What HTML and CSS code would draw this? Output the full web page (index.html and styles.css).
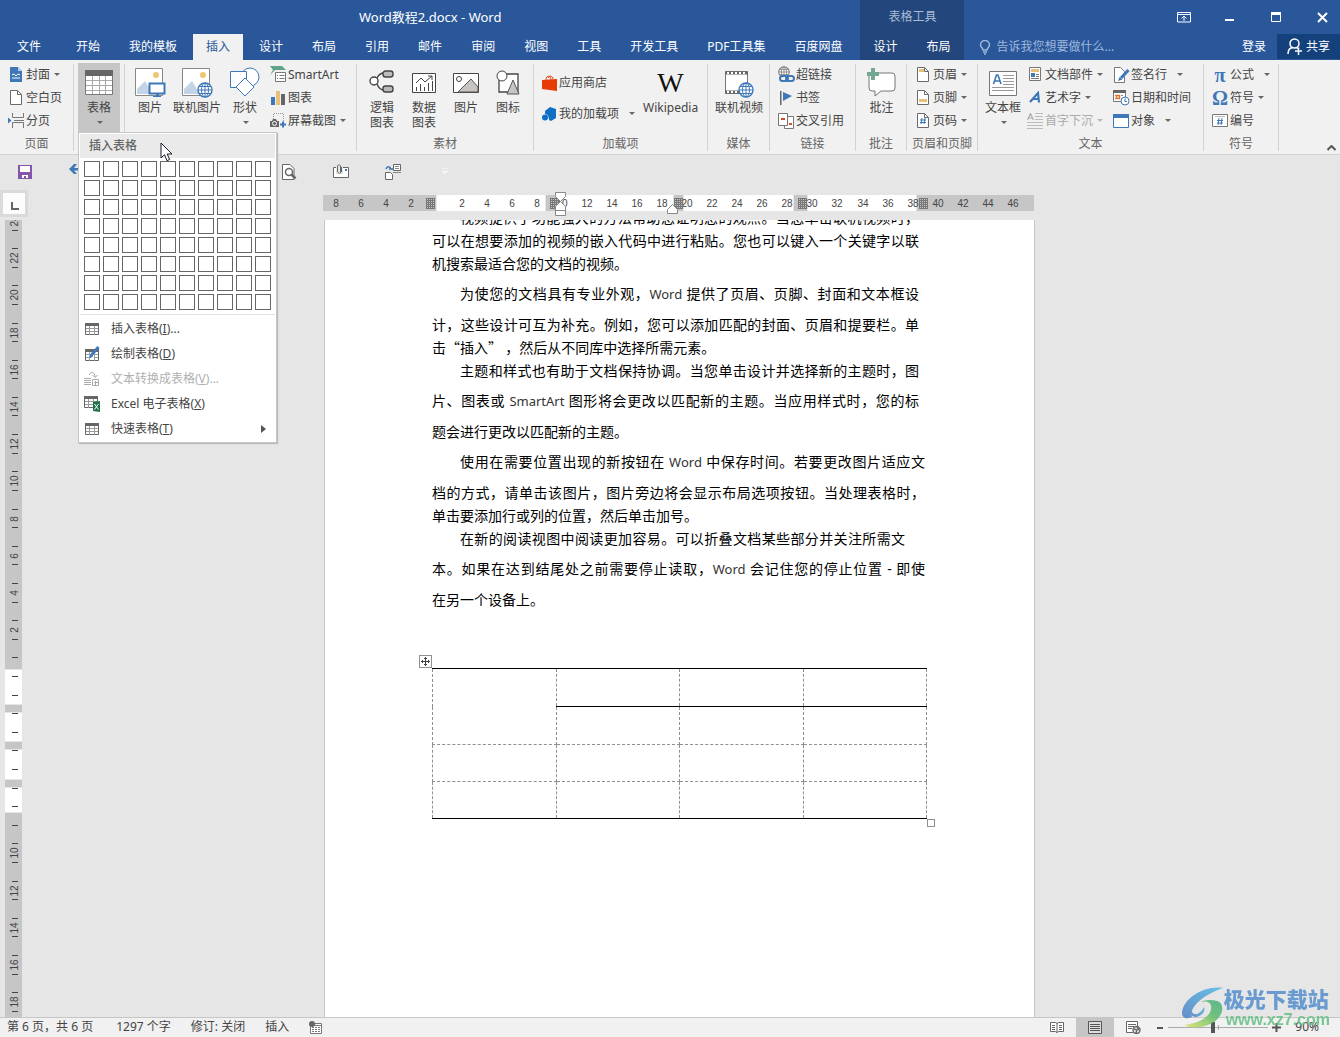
FILE: index.html
```html
<!DOCTYPE html>
<html lang="zh-CN">
<head>
<meta charset="utf-8">
<title>Word教程2.docx - Word</title>
<link rel="stylesheet" href="styles.css">
</head>
<body>
<svg class="defs" aria-hidden="true">
  <symbol id="globe" viewBox="0 0 16 16"><circle cx="8" cy="8" r="7" fill="#fff" stroke="currentColor" stroke-width="1.4"/><path d="M8 1v14M1 8h14M2.500 4.500h11M2.500 11.500h11" stroke="currentColor" fill="none"/><ellipse cx="8" cy="8" rx="3.500" ry="7" fill="none" stroke="currentColor"/></symbol>
  <symbol id="grid" viewBox="0 0 14 12"><path d="M.5.5h13v11H.5z" fill="#fff" stroke="#666"/><path d="M0 0h14v3H0z" fill="#666"/><path d="M4.500 3v9M9.500 3v9M1 5.500h12M1 8.500h12" stroke="#999"/></symbol>
  <symbol id="sheet" viewBox="0 0 12 15"><path d="M.5.5h7l4 4v10H.5z" fill="#fff" stroke="#6a6a6a"/><path d="M7.500.5v4h4" fill="none" stroke="#6a6a6a"/></symbol>
</svg>

<header class="titlebar">
  <h1 class="doc-title">Word教程2.docx - Word</h1>
  <div class="context-title">表格工具</div>
  <div class="window-controls">
    <button aria-label="功能区显示选项"><svg width="14" height="11"><path d="M.5.5h13v9.500H.5zM.5 2.500h13M7 9V4.500M4.500 6.500L7 4l2.500 2.500" fill="none" stroke="#fff"/></svg></button>
    <button aria-label="最小化"><svg width="10" height="11"><path d="M0 7h9v2H0z" fill="#fff"/></svg></button>
    <button aria-label="最大化"><svg width="11" height="11"><path d="M.5.5h9v9h-9z" fill="none" stroke="#fff"/><path d="M0 0h10v3H0z" fill="#fff"/></svg></button>
    <button aria-label="关闭"><svg width="11" height="11"><path d="M1 1l9 9M10 1l-9 9" stroke="#fff" stroke-width="2"/></svg></button>
  </div>
  <nav class="tabs">
    <button class="tab tab-file">文件</button><button class="tab">开始</button><button class="tab">我的模板</button><button class="tab tab-active">插入</button><button class="tab">设计</button><button class="tab">布局</button><button class="tab">引用</button><button class="tab">邮件</button><button class="tab">审阅</button><button class="tab">视图</button><button class="tab">工具</button><button class="tab">开发工具</button><button class="tab">PDF工具集</button><button class="tab">百度网盘</button>
  </nav>
  <nav class="tabs context-tabs"><button class="tab">设计</button><button class="tab">布局</button></nav>
  <div class="account">
    <label class="tell-me"><svg width="12" height="15" viewBox="0 0 12 15"><path d="M4 10C4 8 1.500 7.500 1.500 4.800a4.500 4.300 0 0 1 9 0C10.500 7.500 8 8 8 10zM4 12h4M5 14h2" fill="none" stroke="#9fb8dc" stroke-width="1.500"/></svg><input type="text" placeholder="告诉我您想要做什么..." aria-label="告诉我您想要做什么"></label>
    <button class="login">登录</button>
    <button class="share"><svg width="16" height="17" viewBox="0 0 16 17"><circle cx="7.500" cy="5.500" r="4.500" fill="none" stroke="#fff" stroke-width="1.500"/><path d="M1 16c0-4 2-6 4.500-6.500M9.500 9.500l1.500 1M8 13h7M11.500 9.500V17" fill="none" stroke="#fff" stroke-width="1.500"/></svg>共享</button>
  </div>
</header>

<section class="ribbon">
  <div class="group">
    <div class="tools pad-page">
      <div class="stack">
        <button class="small"><span class="ico"><svg width="12" height="15"><path d="M0 0h8l4 4v11H0z" fill="#3e78b8"/><path d="M8 0v4h4" fill="#b6cfe8"/><path d="M2 8l2-1 2 2 2-2 2 1M2 11h8" fill="none" stroke="#fff"/></svg></span>封面<i class="caret"></i></button>
        <button class="small"><span class="ico"><svg width="12" height="15"><use href="#sheet"/></svg></span>空白页</button>
        <button class="small"><span class="ico"><svg width="17" height="15"><path d="M4.500 0v4.500h11V0M4.500 15v-5.500h11V15M6 7.500h10" fill="none" stroke="#777"/><path d="M0 4.500l3.500 3L0 10.500z" fill="#3e78b8"/></svg></span>分页</button>
      </div>
    </div>
    <div class="group-name">页面</div>
  </div>

  <div class="group group-table">
    <button class="big pressed" aria-haspopup="menu" aria-expanded="true"><span class="big-ico"><svg width="28" height="26"><path d="M.5.5h27v24H.5z" fill="#fff" stroke="#777"/><path d="M0 0h28v6H0z" fill="#666"/><path d="M7.500 6v18M14.500 6v18M20.500 6v18M1 10.500h26M1 15.500h26M1 20.500h26" stroke="#aaa"/></svg></span>表格<i class="caret"></i></button>
    <div class="menu" role="menu">
      <div class="menu-title">插入表格</div>
      <div class="picker" id="picker"></div>
      <div class="menu-items">
        <button role="menuitem"><svg width="17" height="16"><use href="#grid" x="1" y="2" width="14" height="12"/></svg><span>插入表格(<u>I</u>)...</span></button>
        <button role="menuitem"><svg width="17" height="16"><use href="#grid" x="1" y="3" width="14" height="12"/><path d="M6 8h4v5H4z" fill="#fff"/><path d="M14.500 1L7 9.500" stroke="#3e78b8" stroke-width="3"/><path d="M6 8.500l3 2L4.500 13z" fill="#3e78b8"/></svg><span>绘制表格(<u>D</u>)</span></button>
        <button role="menuitem" disabled><svg width="17" height="16"><path d="M0 7.500h7M0 9.500h7M0 11.500h7M0 13.500h7M5 4c2-4 6-3 6 2M8.500 4L11 6.500 13.500 4M8.500 8.500h6v6h-6zM10 11.500h4M11.500 10v4" fill="none" stroke="#aaa"/></svg><span>文本转换成表格(<u>V</u>)...</span></button>
        <button role="menuitem"><svg width="17" height="16"><use href="#grid" x="0" y="0" width="14" height="12"/><path d="M9 6l7-1v11l-7-1z" fill="#1f7346"/><path d="M10.500 8l4 5.500M14.500 8l-4 5.500" stroke="#fff"/></svg><span>Excel 电子表格(<u>X</u>)</span></button>
        <button role="menuitem"><svg width="17" height="16"><use href="#grid" x="1" y="2" width="14" height="12"/></svg><span>快速表格(<u>T</u>)</span><i class="arrow"></i></button>
      </div>
      <svg class="pointer" width="13" height="20" viewBox="0 0 13 20"><path d="M1 1v15l3.500-3.300 2.500 6 2.600-1.200L7.200 12H12z" fill="#fff" stroke="#1b1b2b"/></svg>
    </div>
  </div>

  <div class="group">
    <div class="tools pad-illus">
      <button class="big w40"><span class="big-ico"><svg width="32" height="32"><path d="M1.500 1.500h27v27h-27z" fill="#fff" stroke="#888"/><path d="M3 27V22l8-8 8 13z" fill="#c3d3e8"/><circle cx="22" cy="8" r="3" fill="#edc574"/><path d="M15.500 16.500h15v10h-15z" fill="#fff" stroke="#3e78b8" stroke-width="2"/><path d="M22 27h3v3h-3zM19 29h8v1h-8z" fill="#3e78b8"/></svg></span>图片</button>
      <button class="big w54"><span class="big-ico"><svg width="32" height="32"><path d="M1.500 1.500h27v27h-27z" fill="#fff" stroke="#888"/><path d="M3 27V22l8-8 8 13z" fill="#c3d3e8"/><circle cx="22" cy="8" r="3" fill="#edc574"/><use href="#globe" x="16" y="15" width="16" height="16" color="#3e78b8"/></svg></span>联机图片</button>
      <button class="big w42"><span class="big-ico"><svg width="30" height="32"><circle cx="20" cy="10" r="9" fill="#fff" stroke="#3e78b8"/><path d="M.5 4.500h16v16H.5z" fill="#fff" stroke="#3e78b8"/><path d="M15 11l9 9-9 9-9-9z" fill="#fff" stroke="#3e78b8"/></svg></span>形状<i class="caret"></i></button>
      <div class="stack gap3">
        <button class="small"><span class="ico"><svg width="17" height="17"><path d="M0 0h12l4 4H5l-5 5 3-5z" fill="#5fa388"/><path d="M5.500 6.500h10v9h-10z" fill="#fff" stroke="#777"/><path d="M7 9.500h1M9.500 9.500h5M7 12.500h1M9.500 12.500h5" stroke="#777"/></svg></span>SmartArt</button>
        <button class="small"><span class="ico"><svg width="15" height="14"><path d="M0 6h4v8H0z" fill="#3e78b8"/><path d="M5 0h4v14H5z" fill="#e8c07a"/><path d="M10 3h4v11h-4z" fill="#666"/></svg></span>图表</button>
        <button class="small"><span class="ico"><svg width="16" height="15"><path d="M3.500 6V.5h10V8" fill="none" stroke="#999" stroke-dasharray="1 1"/><path d="M0 8h2l1-2h3l1 2h2v6H0z" fill="#666"/><circle cx="4.500" cy="10.500" r="2" fill="#666" stroke="#fff"/><path d="M10 11.500h6M13 8.500v6" stroke="#3e78b8" stroke-width="2"/></svg></span>屏幕截图<i class="caret"></i></button>
      </div>
    </div>
    <div class="group-name"></div>
  </div>

  <div class="group">
    <div class="tools pad4">
      <button class="big w42"><span class="big-ico"><svg width="26" height="26"><path d="M8 8c2-4 4-5 7-5M8 14c2 5 4 6 7 6" fill="none" stroke="#444" stroke-width="1.400"/><circle cx="5" cy="11" r="4" fill="#fff" stroke="#444" stroke-width="1.400"/><rect x="14" y="1" width="10" height="6" rx="2.500" fill="#bbb" stroke="#444" stroke-width="1.400"/><rect x="14" y="16" width="10" height="6" rx="2.500" fill="#bbb" stroke="#444" stroke-width="1.400"/></svg></span>逻辑<br>图表</button>
      <button class="big w42"><span class="big-ico"><svg width="26" height="26"><path d="M1.500 3.500h23v19h-23z" fill="#fff" stroke="#444"/><path d="M5.500 17v4M9.500 14v7M13.500 17v4M17.500 13v8M21.500 11v10M5 13l5-5 4 4 7-6M17 6h4v4" fill="none" stroke="#444"/></svg></span>数据<br>图表</button>
      <button class="big w42"><span class="big-ico"><svg width="26" height="26"><path d="M.5 3.500h25v19H.5z" fill="#fff" stroke="#444"/><path d="M5 22L18 9l7 8v5z" fill="#c8c4c2" stroke="#555"/><circle cx="6" cy="9" r="2.500" fill="none" stroke="#444"/></svg></span>图片</button>
      <button class="big w42"><span class="big-ico"><svg width="26" height="26"><path d="M4 4h19v18H4z" fill="#fff" stroke="#444" stroke-width="1.300"/><circle cx="7" cy="6" r="5" fill="#fff" stroke="#444"/><path d="M18 10l6 14H12z" fill="#c8c4c2" stroke="#555"/></svg></span>图标</button>
    </div>
    <div class="group-name">素材</div>
  </div>

  <div class="group">
    <div class="tools pad6">
      <div class="stack stack-two">
        <button class="small"><span class="ico"><svg width="15" height="16"><path d="M0 5l15-1v12L0 14z" fill="#e63b07"/><path d="M4 5c0-5 5-5 5 0M6 3c1-3 5-2 5 1" fill="none" stroke="#e63b07"/></svg></span>应用商店</button>
        <button class="small"><span class="ico"><svg width="15" height="14"><path d="M3 4l5-4 6 2v9l-5 3-2-1c0-4-2-6-4-6z" fill="#0f70c5"/><circle cx="3" cy="10.500" r="3" fill="#0f70c5"/></svg></span>我的加载项<i class="caret caret-far"></i></button>
      </div>
      <button class="big wiki"><span class="big-ico wiki-mark">W</span>Wikipedia</button>
    </div>
    <div class="group-name">加载项</div>
  </div>

  <div class="group">
    <div class="tools center">
      <button class="big w54"><span class="big-ico"><svg width="30" height="30"><path d="M1.500 3.500h22v22h-22z" fill="#fff" stroke="#777"/><path d="M1 5h23M1 24h23" stroke="#666" stroke-width="3"/><path d="M3 5h20M3 24h20" stroke="#fff" stroke-width="2" stroke-dasharray="2 2"/><use href="#globe" x="14" y="14" width="16" height="16" color="#3e78b8"/></svg></span>联机视频</button>
    </div>
    <div class="group-name">媒体</div>
  </div>

  <div class="group">
    <div class="tools pad-page">
      <div class="stack">
        <button class="small"><span class="ico"><svg width="17" height="17"><use href="#globe" x="0" y="0" width="12" height="12" color="#777"/><rect x="2" y="10" width="8" height="5" rx="2.500" fill="#f1f1f1" stroke="#3e78b8" stroke-width="2"/><rect x="8" y="10" width="8" height="5" rx="2.500" fill="none" stroke="#3e78b8" stroke-width="2"/></svg></span>超链接</button>
        <button class="small"><span class="ico"><svg width="12" height="14"><path d="M0 0h1.500v14H0z" fill="#666"/><path d="M3 1l9 4-9 5z" fill="#3e78b8"/></svg></span>书签</button>
        <button class="small"><span class="ico"><svg width="17" height="16"><path d="M6.500 3.500h9v12h-9z" fill="#fff" stroke="#777"/><path d="M.5.5h9v12h-9z" fill="#fff" stroke="#777"/><path d="M3 5h4v2H3zM11 10h3v2h-3z" fill="#d1502c"/></svg></span>交叉引用</button>
      </div>
    </div>
    <div class="group-name">链接</div>
  </div>

  <div class="group">
    <div class="tools center">
      <button class="big w42"><span class="big-ico"><svg width="30" height="30"><path d="M4 5h21q3 0 3 3v12q0 3-3 3H14l-6 5v-5H5q-3 0-3-3V8q0-3 2-3z" fill="#fff" stroke="#777"/><path d="M0 6h12M6 0v12" stroke="#74a893" stroke-width="4"/></svg></span>批注</button>
    </div>
    <div class="group-name">批注</div>
  </div>

  <div class="group">
    <div class="tools pad-page">
      <div class="stack">
        <button class="small"><span class="ico"><svg width="12" height="15"><use href="#sheet"/><path d="M2 2h5v3H2z" fill="#e8c07a"/></svg></span>页眉<i class="caret"></i></button>
        <button class="small"><span class="ico"><svg width="12" height="15"><use href="#sheet"/><path d="M2 9h8v3H2z" fill="#e8c07a"/></svg></span>页脚<i class="caret"></i></button>
        <button class="small"><span class="ico"><svg width="12" height="15"><use href="#sheet"/><path d="M5 5L4 11M8 5L7 11M3 7h6M3 9.500h6" stroke="#3e78b8"/></svg></span>页码<i class="caret"></i></button>
      </div>
    </div>
    <div class="group-name">页眉和页脚</div>
  </div>

  <div class="group">
    <div class="tools pad4">
      <button class="big w42"><span class="big-ico"><svg width="28" height="28"><path d="M.5 2.500h27v24H.5z" fill="#fff" stroke="#777"/><path d="M14 6.500h11M14 9.500h11M14 12.500h11M14 15.500h11M3 18.500h22M3 21.500h22" stroke="#999"/><path d="M4.500 15l3-9h1.500l3 9M6 12h5" fill="none" stroke="#3e78b8" stroke-width="1.600"/></svg></span>文本框<i class="caret"></i></button>
      <div class="stack gap2 w86">
        <button class="small"><span class="ico"><svg width="12" height="15"><path d="M.5.5h11v13H.5z" fill="#fff" stroke="#777"/><path d="M2 2h8v3H2z" fill="#e8c07a"/><path d="M2 6h4v4H2z" fill="#3e78b8"/><path d="M7 7.500h3M7 9.500h3M2 11.500h8" stroke="#777"/></svg></span>文档部件<i class="caret"></i></button>
        <button class="small"><span class="ico"><svg width="13" height="13"><path d="M1 11L9 2l1 9.500M4 8h6" fill="none" stroke="#3e78b8" stroke-width="2.200"/></svg></span>艺术字<i class="caret"></i></button>
        <button class="small" disabled><span class="ico"><svg width="17" height="16"><path d="M8 .5h8M8 3.500h8M8 6.500h8M0 9.500h16M0 12.500h16M0 15.500h16" stroke="#bbb"/><path d="M.5 7L3.500.5 6.500 7M2 5h3" fill="none" stroke="#aaa" stroke-width="1.200"/></svg></span>首字下沉<i class="caret"></i></button>
      </div>
      <div class="stack">
        <button class="small"><span class="ico"><svg width="17" height="16"><path d="M1.500.5h6l4 4v11h-10z" fill="#fff" stroke="#777"/><path d="M15.500 3L8 11" stroke="#3e78b8" stroke-width="3"/><path d="M6.500 10l3 2.500L5 14z" fill="#3e78b8"/></svg></span>签名行<i class="caret caret-far"></i></button>
        <button class="small"><span class="ico"><svg width="17" height="16"><path d="M.5.500h12v11H.5z" fill="#fff" stroke="#777"/><path d="M0 0h13v3H0z" fill="#666"/><path d="M2 5.500h9M2 8.500h9" stroke="#888" stroke-dasharray="2 1"/><path d="M3.500 5.500h3v3h-3z" fill="#fff" stroke="#d9762b" stroke-width="1.500"/><circle cx="12" cy="11" r="4" fill="#fff" stroke="#3e78b8"/><path d="M12 8.500V11.500h2" fill="none" stroke="#3e78b8"/></svg></span>日期和时间</button>
        <button class="small"><span class="ico"><svg width="16" height="14"><path d="M.5.5h15v13H.5z" fill="#fff" stroke="#3e78b8"/><path d="M0 0h16v4H0z" fill="#3e78b8"/></svg></span>对象<i class="caret caret-far"></i></button>
      </div>
    </div>
    <div class="group-name">文本</div>
  </div>

  <div class="group">
    <div class="tools pad-page">
      <div class="stack">
        <button class="small"><span class="ico glyph">π</span>公式<i class="caret caret-far"></i></button>
        <button class="small"><span class="ico glyph">Ω</span>符号<i class="caret"></i></button>
        <button class="small"><span class="ico"><svg width="16" height="13"><path d="M.5.5h15v12H.5z" fill="#fff" stroke="#777"/><path d="M3 2.500h10" stroke="#bbb"/><path d="M7 4L6 11M10 4L9 11M5 6.500h6M5 9h6" stroke="#3e78b8"/></svg></span>编号</button>
      </div>
    </div>
    <div class="group-name">符号</div>
  </div>
  <button class="collapse" aria-label="折叠功能区"><svg width="9" height="6"><path d="M.5 5l4-4 4 4" fill="none" stroke="#555" stroke-width="2"/></svg></button>
</section>

<div class="quick">
  <button aria-label="保存"><svg width="14" height="14"><path d="M0 0h14v14H0z" fill="#8456ab"/><path d="M2 1h10v6H2zM4 10h6v3H4z" fill="#fff"/><path d="M6 11h2v3H6z" fill="#8456ab"/></svg></button>
  <button aria-label="撤消"><svg width="20" height="15"><path d="M0 5l5-5h3L5 4h6q6 0 6 5t-5 5V11q2 0 2-2t-3-2.500H5l3 3.500H5z" fill="#3e78b8"/></svg></button>
  <div class="quick-more">
    <button aria-label="打印预览"><svg width="16" height="16"><path d="M2 .5h7l4 4V15.500H1.500V.5z" fill="#fff" stroke="#666"/><circle cx="8" cy="8" r="3.500" fill="#fff" stroke="#666" stroke-width="1.500"/><path d="M10.500 10.500l4 4" stroke="#666" stroke-width="2.500"/></svg></button>
    <button aria-label="附件"><svg width="17" height="15"><path d="M.5 3.500h15v10H.5z" fill="#fff" stroke="#666"/><path d="M3 0h7v10H3z" fill="#e6e6e6"/><path d="M8.500 3v5q-2 3-4 0V2q1.500-3 3 0v6" fill="none" stroke="#666"/><path d="M12 5h2v2h-2z" fill="#3e78b8"/></svg></button>
    <button aria-label="插入批注"><svg width="17" height="16"><path d="M8.500.5h7v6h-7zM.5 8.500h5l2 2v5h-7z" fill="#fff" stroke="#666"/><path d="M10 2.500h4M10 4.500h4M8 8.500h8" stroke="#888"/><path d="M1 5c1-3 4-3 5 0M4 5h4" fill="none" stroke="#3e78b8" stroke-width="1.400"/></svg></button>
    <button aria-label="自定义快速访问工具栏"><svg width="6" height="7"><path d="M0 .5h6M0 3h6L3 6z" stroke="#f4f4f4" fill="#f4f4f4"/></svg></button>
  </div>
</div>

<main class="workspace">
  <div class="ruler-corner"><button class="tab-stop" aria-label="左对齐式制表符"><svg width="8" height="9"><path d="M1 0v7h7" fill="none" stroke="#666" stroke-width="2"/></svg></button></div>
  <div class="ruler-row"><svg class="ruler-h" id="rulerH" width="711" height="26"></svg></div>
  <div class="ruler-col"><svg id="rulerV" width="17" height="797"></svg></div>
  <div class="canvas">
    <article class="page">
      <p><span class="line first full">视频提供了功能强大的方法帮助您证明您的观点。当您单击联机视频时，</span><span class="line full">可以在想要添加的视频的嵌入代码中进行粘贴。您也可以键入一个关键字以联</span><span class="line">机搜索最适合您的文档的视频。</span></p>
      <p><span class="line first tall full">为使您的文档具有专业外观，<b>Word</b> 提供了页眉、页脚、封面和文本框设</span><span class="line full">计，这些设计可互为补充。例如，您可以添加匹配的封面、页眉和提要栏。单</span><span class="line quoted">击“插入” ，然后从不同库中选择所需元素。</span></p>
      <p><span class="line first full">主题和样式也有助于文档保持协调。当您单击设计并选择新的主题时，图</span><span class="line tall full">片、图表或 <b>SmartArt</b> 图形将会更改以匹配新的主题。当应用样式时，您的标</span><span class="line">题会进行更改以匹配新的主题。</span></p>
      <p class="wide"><span class="line first tall full">使用在需要位置出现的新按钮在 <b>Word</b> 中保存时间。若要更改图片适应文</span><span class="line full">档的方式，请单击该图片，图片旁边将会显示布局选项按钮。当处理表格时，</span><span class="line">单击要添加行或列的位置，然后单击加号。</span></p>
      <p class="wide"><span class="line first loose">在新的阅读视图中阅读更加容易。可以折叠文档某些部分并关注所需文</span><span class="line tall full">本。如果在达到结尾处之前需要停止读取，<b>Word</b> 会记住您的停止位置 - 即使</span><span class="line">在另一个设备上。</span></p>
      <div class="table-frame">
        <span class="move-handle"><svg width="11" height="11"><path d="M5.500 1v9M1 5.500h9M4 2.500h3M4 8.500h3M2.500 4v3M8.500 4v3" stroke="#444" fill="none"/></svg></span>
        <table class="doc-table">
          <tr class="head-row"><td rowspan="2"></td><td class="ruled"></td><td class="ruled"></td><td class="ruled"></td></tr>
          <tr class="head-row"><td></td><td></td><td></td></tr>
          <tr><td></td><td></td><td></td><td></td></tr>
          <tr><td></td><td></td><td></td><td></td></tr>
        </table>
        <span class="size-handle"></span>
      </div>
    </article>
  </div>
</main>

<footer class="status">
  <span class="st-page">第 6 页，共 6 页</span><span>1297 个字</span><span>修订: 关闭</span><span>插入</span>
  <button class="macro" aria-label="宏录制"><svg width="13" height="13"><path d="M1.500 4.500h11v8h-11zM5 2.500h7.500v2" fill="#fff" stroke="#777"/><path d="M3 6.500h8M3 8.500h8M3 10.500h8" stroke="#777" stroke-dasharray="2 1"/><circle cx="3" cy="3" r="3" fill="#666"/></svg></button>
  <div class="views">
    <button aria-label="阅读视图"><svg width="14" height="13"><path d="M.5 1.500h5l1.500 1 1.500-1h5v9h-5l-1.500 1-1.500-1h-5zM7 2v10" fill="#fff" stroke="#666"/><path d="M2 4.500h3M2 6.500h3M2 8.500h3M9 4.500h3M9 6.500h3M9 8.500h3" stroke="#666"/></svg></button>
    <button class="current" aria-label="页面视图"><svg width="14" height="13"><path d="M.5.5h13v12H.5z" fill="#ddd" stroke="#555"/><path d="M2 3.500h10M2 5.500h10M2 7.500h10M2 9.500h10" stroke="#555"/></svg></button>
    <button aria-label="Web 版式视图"><svg width="15" height="13"><path d="M7 11.500H.5V.5h11v5" fill="#fff" stroke="#666"/><path d="M2 3.500h8M2 5.500h6M2 7.500h4" stroke="#666"/><circle cx="10.500" cy="9" r="3.500" fill="#eee" stroke="#666" stroke-width="1.400"/><path d="M8 8l3 1-1 3M11 6l2 3" stroke="#666" fill="none" stroke-width="1.400"/></svg></button>
  </div>
  <div class="zoom">
    <button aria-label="缩小"><svg width="7" height="9"><path d="M0 4h6v2H0z" fill="#555"/></svg></button>
    <input type="range" min="0" max="100" value="45" aria-label="缩放">
    <button aria-label="放大"><svg width="9" height="9"><path d="M0 4.500h9M4.500 0v9" stroke="#555" stroke-width="2"/></svg></button>
    <button class="percent">90%</button>
  </div>
</footer>

<div class="brand">
  <svg width="43" height="42" viewBox="0 0 43 42">
    <defs><linearGradient id="bl" x1="0" y1="1" x2="1" y2="0"><stop offset="0" stop-color="#5584c4"/><stop offset="1" stop-color="#5dbce6"/></linearGradient><linearGradient id="gr" x1="0" y1="1" x2="1" y2="0"><stop offset="0" stop-color="#dfe26a"/><stop offset=".6" stop-color="#62bd74"/><stop offset="1" stop-color="#4fae80"/></linearGradient></defs>
    <path d="M42 1C24-2 2 11 1 26c0 6 6 6 10 4-3-7 6-20 31-29z" fill="url(#bl)"/>
    <path d="M10 19c-3 7 0 11 5 11 6-1 10-6 8-10-2 4-6 8-9 7-3 0-4-4-4-8z" fill="url(#bl)"/>
    <path d="M20 15c7-2 11 1 10 7-1 8-12 14-26 16 5 5 33 3 37-14 1-5-1-9-5-10-6-2-13-1-16 1z" fill="url(#gr)"/>
  </svg>
  <div class="brand-text"><strong>极光下载站</strong><span>www.xz7.com</span></div>
</div>
<script src="script.js"></script>
</body>
</html>
```
FILE: script.js
```js
// Table size picker: 10 columns by 8 rows
const picker = document.getElementById('picker');
for (let r = 1; r <= 8; r++) {
  for (let c = 1; c <= 10; c++) {
    const b = document.createElement('button');
    b.setAttribute('aria-label', c + '×' + r + ' 表格');
    picker.appendChild(b);
  }
}

const NS = 'http://www.w3.org/2000/svg';
function add(parent, name, attrs, text) {
  const el = document.createElementNS(NS, name);
  for (const k in attrs) el.setAttribute(k, attrs[k]);
  if (text !== undefined) el.textContent = text;
  parent.appendChild(el);
  return el;
}

// Horizontal ruler
const h = document.getElementById('rulerH');
add(h, 'rect', { x: 0, y: 4, width: 711, height: 16, fill: '#c6c6c6' });
[[114, 108], [237, 113], [361, 109], [485, 108]].forEach(([x, w]) => {
  add(h, 'rect', { x: x - 1, y: 4, width: w + 2, height: 16, fill: '#e6e6e6' });
  add(h, 'rect', { x, y: 4, width: w, height: 16, fill: '#fff' });
});
for (let i = -8; i <= 46; i += 2) {
  if (i === 0) continue;
  add(h, 'text', { x: Math.round(113.5 + i * 12.53), y: 16, class: 'ruler-num' }, Math.abs(i));
}
[103, 227, 351, 475, 596].forEach(x => {
  for (let k = 0; k < 5; k++) {
    add(h, 'path', { d: `M${x + k * 2 + .5} 7v11M${x} ${7.5 + k * 2}h9M${x} 17.5h9`, stroke: '#777' });
  }
});
add(h, 'path', { d: 'M232.500 1.500h10v4l-5 5 5 5v9h-10v-9l5-5-5-5zM232.500 19.500h10', fill: '#fff', stroke: '#888' });
add(h, 'path', { d: 'M344.500 22.500v-4l5-5 5 5v4z', fill: '#fff', stroke: '#888' });

// Vertical ruler
const v = document.getElementById('rulerV');
add(v, 'rect', { x: 0, y: 0, width: 17, height: 797, fill: '#c6c6c6' });
[[450, 34], [493, 28], [530, 29], [568, 24]].forEach(([y, len]) => {
  add(v, 'rect', { x: 0, y: y - 1, width: 17, height: len + 2, fill: '#e6e6e6' });
  add(v, 'rect', { x: 0, y, width: 17, height: len, fill: '#fff' });
});
for (let y = 9.5; y < 797; y += 18.6) {
  add(v, 'path', { d: `M7 ${Math.round(y) + .5}h6`, stroke: '#444' });
}
for (let i = 0; i <= 21; i++) {
  const n = i < 12 ? 24 - 2 * i : 2 * i - 24;
  if (i > 11 && n < 10) continue;
  const y = Math.round(1 + i * 37.2);
  add(v, 'text', { x: 0, y: 0, class: 'ruler-num', transform: `translate(13 ${y}) rotate(-90)` }, n);
}
```
FILE: styles.css
```css
* { box-sizing: border-box; }
body {
  margin: 0; height: 100vh; display: flex; flex-direction: column; overflow: hidden;
  background: #e6e6e6; color: #444;
  font: 12px/16px "Noto Sans", "Noto Sans CJK SC", sans-serif;
}
button, input { font: inherit; color: inherit; border: 0; padding: 0; margin: 0; background: none; }
button { white-space: nowrap; }
svg { display: block; flex: none; }
.defs { position: absolute; width: 0; height: 0; }

/* Title bar and tabs */
.titlebar { display: grid; grid-template-columns: auto auto 1fr; grid-template-rows: 34px 26px; background: #2a579a; color: #fff; flex: none; }
.doc-title { margin: 0; font-size: 13px; font-weight: 400; line-height: 34px; text-align: center; }
.context-title { background: #23477c; color: #a9bbd6; text-align: center; line-height: 34px; }
.window-controls { display: flex; justify-content: flex-end; gap: 10px; }
.window-controls button { width: 36px; display: grid; place-items: center; }
.tabs { display: flex; gap: 3px; padding: 0 5px 0 4px; }
.tab { padding: 0 13px; line-height: 24px; }
.tab-file { margin-right: 6px; }
.tab-active { background: #f1f1f1; color: #2a579a; }
.context-tabs { background: #23477c; padding: 0 1px 0 0; }
.account { display: flex; align-items: center; padding-left: 15px; }
.tell-me { display: flex; align-items: center; gap: 5px; flex: 1; }
.tell-me input { flex: 1; min-width: 0; }
.tell-me input::placeholder { color: #9fb8dc; opacity: 1; }
.login { padding: 0 11px; }
.share { display: flex; align-items: center; justify-content: center; gap: 3px; width: 63px; height: 25px; background: #14417b; align-self: flex-start; }

/* Ribbon */
.ribbon {
  display: grid; grid-template-columns: 74px 51px 232px 177px 174px 62px 86px 51px 71px 226px 75px 1fr;
  height: 95px; flex: none; background: #f1f1f1; border-bottom: 1px solid #d2d2d2;
}
.group { position: relative; display: flex; flex-direction: column; padding-top: 3px; }
.group::after { content: ""; position: absolute; right: 0; top: 4px; bottom: 4px; width: 1px; background: #d2d2d2; }
.tools { display: flex; height: 69px; }
.center { justify-content: center; }
.pad-page { padding-left: 7px; }
.pad-illus { padding-left: 5px; }
.pad4 { padding-left: 4px; }
.pad6 { padding-left: 6px; }
.group-name { text-align: center; line-height: 22px; color: #666; padding: 1px 1px 0 0; }
.stack { display: flex; flex-direction: column; align-items: flex-start; }
.stack-two { width: 102px; padding-top: 8px; gap: 8px; }
.gap2 { margin-left: 2px; }
.gap3 { margin-left: 3px; }
.w40 { width: 40px; }
.w42 { width: 42px; }
.w54 { width: 54px; }
.w86 { width: 86px; }
.small { display: flex; align-items: center; gap: 1px; height: 23px; }
.small:disabled { color: #aaa; }
.ico { width: 18px; display: grid; place-items: center; }
.glyph { color: #3e78b8; font: bold 20px/22px "Liberation Serif", serif; }
.caret { display: block; flex: none; border: 3px solid transparent; border-top-color: #666; border-bottom: 0; }
.small .caret { margin-left: 3px; }
.small .caret-far { margin-left: 9px; }
.small:disabled .caret { border-top-color: #bbb; }
.big { display: flex; flex-direction: column; align-items: center; line-height: 15px; padding-top: 3px; height: 69px; }
.big-ico { height: 34px; display: grid; place-items: center; }
.big .caret { margin: 6px 0 0 2px; }
.wiki { padding-left: 1px; }
.wiki-mark { color: #111; font: 28px/34px "Liberation Serif", serif; }
.group-table { padding-left: 4px; }
.pressed { width: 42px; background: #c6c6c6; }
.collapse { justify-self: end; align-self: end; padding: 0 4px 4px; }

/* Table menu */
.menu { position: absolute; z-index: 5; left: 4px; top: 72px; width: 199px; padding: 1px; background: #fff; border: 1px solid #c6c6c6; box-shadow: 1px 1px 1px #bbb; }
.menu-title { height: 24px; line-height: 23px; padding-left: 9px; background: #eaeaea; color: #666; font-weight: 500; }
.picker { display: grid; grid-template-columns: repeat(10, 16px); grid-auto-rows: 16px; gap: 3px; padding: 3px 4px 4px; }
.picker button { background: #fff; border: 1px solid #666; }
.menu-items { border-top: 1px solid #e1e1e1; padding-top: 1px; }
.menu-items button { display: flex; align-items: center; gap: 10px; width: 100%; height: 25px; padding: 0 9px 0 4px; }
.menu-items button:disabled { color: #b0b0b0; }
.arrow { margin-left: auto; border: 4px solid transparent; border-left: 5px solid #555; border-right: 0; }
.pointer { position: absolute; left: 81px; top: 9px; }

/* Quick access */
.quick { display: flex; align-items: center; gap: 35px; height: 35px; flex: none; padding: 0 0 2px 16px; }
.quick button { width: 18px; display: grid; place-items: center; }
.quick-more { display: flex; align-items: center; gap: 34px; margin-left: 158px; }

/* Workspace */
.workspace { flex: 1; min-height: 0; display: grid; grid-template-columns: 28px 1fr; grid-template-rows: 30px 1fr; }
.ruler-corner { height: 27px; padding: 3px; background: #dadada; }
.tab-stop { width: 22px; height: 21px; background: #fcfcfc; display: grid; place-items: center; padding: 5px 0 0 2px; }
.ruler-row { padding: 1px 11px 0 0; overflow: hidden; }
.ruler-h { margin: 0 auto; }
.ruler-num { font: 10px "Liberation Sans", sans-serif; fill: #444; text-anchor: middle; }
.ruler-col { overflow: hidden; padding-left: 5px; }
.canvas { overflow: hidden; padding-right: 9px; display: flex; justify-content: center; }
.page { width: 711px; background: #fff; border: solid #c6c6c6; border-width: 0 1px; padding: 0 107px; color: #000; }
.page p { margin: 0; width: 487px; font-size: 14px; }
.page p.wide { width: 493px; }
.page p:first-child { margin-top: -14px; }
.line { display: block; line-height: 23px; white-space: nowrap; }
.line.tall { line-height: 38px; }
.line.first { padding-left: 28px; }
.line.full, .line.loose { text-align: justify; text-align-last: justify; white-space: normal; }
.line.loose { padding-right: 20px; }
.line.quoted { font-family: "Noto Sans CJK SC", sans-serif; }
.line b { font-weight: 400; font-size: 13px; color: #333; }
.table-frame { position: relative; margin-top: 57px; }
.doc-table { width: 100%; border-collapse: collapse; table-layout: fixed; border-top: 1px solid #000; border-bottom: 1px solid #000; }
.doc-table td { height: 37px; padding: 0; border: 1px dashed #909090; }
.doc-table .head-row td { height: 38px; }
.doc-table tr:first-child td { border-top: 1px solid #000; }
.doc-table tr:last-child td { border-bottom: 1px solid #000; }
.doc-table .ruled { border-bottom: 1px solid #000; }
.move-handle { position: absolute; left: -13px; top: -13px; border: 1px solid #909090; background: #fff; }
.size-handle { position: absolute; right: -8px; bottom: -8px; width: 8px; height: 8px; border: 1px solid #909090; background: #fff; }

/* Status bar */
.status { display: flex; align-items: center; gap: 20px; height: 20px; flex: none; padding: 0 0 1px 7px; background: #f1f1f1; border-top: 1px solid #c6c6c6; white-space: nowrap; }
.st-page { margin-right: 3px; }
.views { display: flex; margin-left: auto; height: 19px; }
.views button { width: 38px; display: grid; place-items: center; }
.views .current { background: #c6c6c6; }
.zoom { display: flex; align-items: center; gap: 4px; padding-right: 21px; margin-left: -15px; }
.zoom input { appearance: none; width: 100px; height: 11px; background: linear-gradient(#aaa, #aaa) 0 5px / 100% 1px no-repeat, linear-gradient(#aaa, #aaa) 50% 3px / 1px 5px no-repeat; }
.zoom input::-webkit-slider-thumb { appearance: none; width: 4px; height: 11px; background: #555; }
.percent { margin-left: 10px; }

/* Site mark */
.brand { position: fixed; right: 10px; bottom: 8px; display: flex; align-items: center; pointer-events: none; opacity: .9; }
.brand-text { display: flex; flex-direction: column; font-weight: 700; }
.brand-text strong { font-size: 21px; line-height: 24px; color: #5b93cf; }
.brand-text span { font: bold 16px/18px "Liberation Sans", sans-serif; color: #6cc08a; padding-left: 2px; }
```
